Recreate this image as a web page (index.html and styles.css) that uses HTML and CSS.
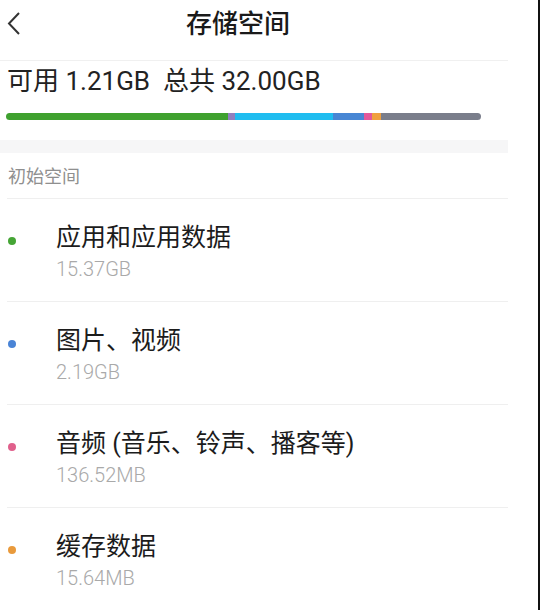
FILE: index.html
```html
<!DOCTYPE html>
<html lang="zh-CN">
<head>
  <meta charset="UTF-8">
  <title>存储空间</title>
  <link rel="stylesheet" href="styles.css">
</head>
<body>

<div class="page">
  <header class="topbar">
    <svg class="back" width="16" height="26" viewBox="0 0 16 26">
      <path d="M13 2 L3 12.5 L13 23" fill="none" stroke="#333" stroke-width="2"/>
    </svg>
    <h1>存储空间</h1>
  </header>

  <div class="summary">
    <div class="total">可用 1.21GB&nbsp; 总共 32.00GB</div>
    <div class="bar">
      <span class="seg green" style="width:46.7%"></span>
      <span class="seg purple" style="width:1.5%"></span>
      <span class="seg cyan" style="width:20.6%"></span>
      <span class="seg blue" style="width:6.5%"></span>
      <span class="seg pink" style="width:1.7%"></span>
      <span class="seg orange" style="width:1.9%"></span>
      <span class="seg grey" style="flex:1"></span>
    </div>
  </div>

  <div class="band"></div>

  <div class="section-title">初始空间</div>

  <ul class="list">
    <li class="item">
      <span class="dot green"></span>
      <div class="text">
        <div class="name">应用和应用数据</div>
        <div class="size">15.37GB</div>
      </div>
    </li>
    <li class="item">
      <span class="dot blue"></span>
      <div class="text">
        <div class="name">图片、视频</div>
        <div class="size">2.19GB</div>
      </div>
    </li>
    <li class="item">
      <span class="dot pink"></span>
      <div class="text">
        <div class="name">音频 (音乐、铃声、播客等)</div>
        <div class="size">136.52MB</div>
      </div>
    </li>
    <li class="item">
      <span class="dot orange"></span>
      <div class="text">
        <div class="name">缓存数据</div>
        <div class="size">15.64MB</div>
      </div>
    </li>
  </ul>
</div>

</body>
</html>
```

FILE: styles.css
```css
html, body {
  margin: 0;
  height: 100%;
}

body {
  background: #fff;
  font-family: Roboto, "Noto Sans CJK SC", sans-serif;
  color: #1f1f1f;
  border-right: 2px solid #111;
  box-sizing: border-box;
  overflow: hidden;
}

.page {
  width: 508px;
}

.topbar {
  height: 61px;
  box-sizing: border-box;
  padding-top: 10px;
  display: flex;
  align-items: flex-start;
  border-bottom: 1px solid #f0f0f0;
}

.back {
  margin: 1px 0 0 6px;
}

.topbar h1 {
  margin: 0 0 0 164px;
  font-size: 26px;
  line-height: 28px;
  font-weight: 500;
  color: #1a1a1a;
}

.summary {
  padding: 5px 27px 20px 6px;
}

.total {
  font-size: 26px;
  line-height: 30px;
  padding-left: 1px;
  color: #222;
}

.bar {
  display: flex;
  height: 7px;
  margin-top: 17px;
  border-radius: 4px;
  overflow: hidden;
}

.seg.green { background: #3fa12f; }
.seg.purple { background: #8f80be; }
.seg.cyan { background: #1fbdf0; }
.seg.blue { background: #4886d4; }
.seg.pink { background: #e2589a; }
.seg.orange { background: #f0a03e; }
.seg.grey { background: #7a7e8b; }

.band {
  height: 13px;
  background: #f6f6f7;
}

.section-title {
  margin-left: 7px;
  height: 45px;
  line-height: 47px;
  padding-left: 1px;
  font-size: 18px;
  color: #8f8f8f;
  border-bottom: 1px solid #efefef;
}

.list {
  list-style: none;
  margin: 0 0 0 7px;
  padding: 0;
}

.item {
  height: 102px;
  display: flex;
  align-items: flex-start;
  border-bottom: 1px solid #efefef;
}

.dot {
  width: 8px;
  height: 8px;
  border-radius: 50%;
  margin: 38px 0 0 1px;
}

.dot.green { background: #45a535; }
.dot.blue { background: #4a84d6; }
.dot.pink { background: #e0608c; }
.dot.orange { background: #e99a3c; }

.text {
  margin-left: 40px;
  padding-top: 24px;
}

.name {
  font-size: 25px;
  line-height: 30px;
  color: #1c1c1c;
}

.size {
  font-size: 20px;
  line-height: 26px;
  margin-top: 3px;
  color: #a9a9a9;
  font-weight: 300;
}
```
